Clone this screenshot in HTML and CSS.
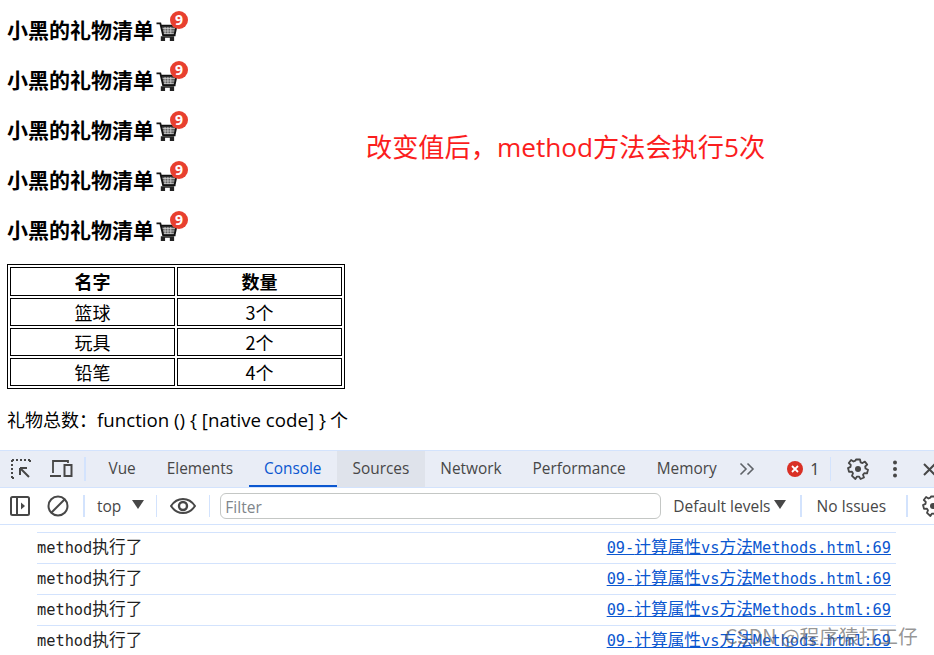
FILE: index.html
```html
<!DOCTYPE html>
<html lang="zh">
<head>
<meta charset="utf-8">
<title>礼物清单</title>
<link rel="stylesheet" href="styles.css">
</head>
<body>
<svg class="defs" width="0" height="0" aria-hidden="true">
  <symbol id="cart" viewBox="0 0 22 21">
    <path d="M5 5.500h16l-2 9H7.500z" fill="#555"/>
    <path d="M6 8h14.500M6.500 10.500h13.500M7 13h12.500M9.500 6v8M12.500 6v8M15.500 6v8" stroke="#ddd" stroke-width=".8" fill="none"/>
    <path d="M.5 2.500h4l3 12.500h13M5 5h16.500l-2 9.500" fill="none" stroke="#111" stroke-width="2"/>
    <path d="M5 16v5h4.500v-3.500h5V21H19v-5z" fill="#222"/>
  </symbol>
</svg>
<main class="page">
  <div class="gifts">
    <h3 class="gift-title">小黑的礼物清单<span class="cart-wrap"><svg class="cart"><use href="#cart"/></svg><span class="badge">9</span></span></h3>
    <h3 class="gift-title">小黑的礼物清单<span class="cart-wrap"><svg class="cart"><use href="#cart"/></svg><span class="badge">9</span></span></h3>
    <h3 class="gift-title">小黑的礼物清单<span class="cart-wrap"><svg class="cart"><use href="#cart"/></svg><span class="badge">9</span></span></h3>
    <h3 class="gift-title">小黑的礼物清单<span class="cart-wrap"><svg class="cart"><use href="#cart"/></svg><span class="badge">9</span></span></h3>
    <h3 class="gift-title">小黑的礼物清单<span class="cart-wrap"><svg class="cart"><use href="#cart"/></svg><span class="badge">9</span></span></h3>
  </div>
  <table class="gift-table">
    <tr><th>名字</th><th>数量</th></tr>
    <tr><td>篮球</td><td>3个</td></tr>
    <tr><td>玩具</td><td>2个</td></tr>
    <tr><td>铅笔</td><td>4个</td></tr>
  </table>
  <p class="total">礼物总数：<span class="total-code">function () { [native code] }</span> 个</p>
</main>
<p class="note">改变值后，method方法会执行5次</p>
<section class="devtools">
  <div class="tabbar">
    <span class="tool"><svg width="22" height="22" viewBox="0 0 22 22"><path d="M2 2h18M2 2v18M2 20h3M20 2v3" fill="none" stroke="#474747" stroke-width="2" stroke-dasharray="2 2"/><path d="M10 10l9 9M10 10h7M10 10v7" fill="none" stroke="#474747" stroke-width="2"/></svg></span>
    <span class="tool tool-device"><svg width="24" height="22" viewBox="0 0 24 22"><path d="M4 15V3h15v2" fill="none" stroke="#474747" stroke-width="1.800"/><path d="M1 18h11" stroke="#474747" stroke-width="2"/><rect x="15.500" y="7" width="7" height="11" fill="none" stroke="#474747" stroke-width="2"/></svg></span>
    <span class="sep sep-tabs"></span>
    <div class="tabs">
      <span class="tab">Vue</span>
      <span class="tab">Elements</span>
      <span class="tab tab-active">Console</span>
      <span class="tab tab-hover">Sources</span>
      <span class="tab">Network</span>
      <span class="tab">Performance</span>
      <span class="tab">Memory</span>
    </div>
    <svg class="more" width="16" height="14" viewBox="0 0 16 14"><path d="M1.500 1.500l5.500 5.500-5.500 5.500M8.500 1.500l5.500 5.500-5.500 5.500" fill="none" stroke="#5f6368" stroke-width="1.600"/></svg>
    <span class="errors"><svg width="16" height="16" viewBox="0 0 16 16"><circle cx="8" cy="8" r="8" fill="#d93025"/><path d="M5 5l6 6M11 5l-6 6" stroke="#fff" stroke-width="1.800"/></svg><span class="error-count">1</span></span>
    <span class="sep sep-right"></span>
    <svg class="gear" width="22" height="22" viewBox="0 0 22 22"><path d="M9 1.500h4l.6 2.800 1.900.8 2.400-1.500 2.300 3-2 1.900.3 2 2.500 1.200-1 3.700-2.800-.2-1.200 1.600 1 2.700-3.400 1.500-1.600-2.400h-2l-1.600 2.400L5 17.900l1-2.700-1.200-1.600-2.800.2-1-3.700 2.500-1.200.3-2-2-1.900 2.300-3 2.400 1.500 1.900-.8z" fill="none" stroke="#474747" stroke-width="1.800" stroke-linejoin="round"/><circle cx="11" cy="11" r="3" fill="#474747"/></svg>
    <svg class="kebab" width="6" height="18" viewBox="0 0 6 18"><circle cx="3" cy="2.500" r="2" fill="#474747"/><circle cx="3" cy="9" r="2" fill="#474747"/><circle cx="3" cy="15.500" r="2" fill="#474747"/></svg>
    <svg class="close" width="12" height="14" viewBox="0 0 12 14"><path d="M1 2l11 11M12 2L1 13" stroke="#474747" stroke-width="2"/></svg>
  </div>
  <div class="toolbar">
    <svg class="side" width="20" height="20" viewBox="0 0 20 20"><rect x="1" y="1" width="18" height="18" rx="1.500" fill="none" stroke="#474747" stroke-width="2"/><path d="M7 1v18" stroke="#474747" stroke-width="2"/><path d="M11 6.500l4 3.500-4 3.500z" fill="#474747"/></svg>
    <svg class="block" width="22" height="22" viewBox="0 0 22 22"><circle cx="11" cy="11" r="9.500" fill="none" stroke="#474747" stroke-width="2"/><path d="M4.500 17.500l13-13" stroke="#474747" stroke-width="2"/></svg>
    <span class="sep sep-a"></span>
    <span class="top-label">top</span>
    <span class="caret caret-top"></span>
    <span class="sep sep-b"></span>
    <svg class="eye" width="26" height="16" viewBox="0 0 26 16"><path d="M1 8c3-4.500 7-7 12-7s9 2.500 12 7c-3 4.500-7 7-12 7S4 12.500 1 8z" fill="none" stroke="#474747" stroke-width="2"/><circle cx="13" cy="8" r="4" fill="none" stroke="#474747" stroke-width="2.400"/></svg>
    <span class="sep sep-c"></span>
    <span class="filter">Filter</span>
    <span class="levels">Default levels</span>
    <span class="caret caret-levels"></span>
    <span class="sep sep-d"></span>
    <span class="issues">No Issues</span>
    <span class="sep sep-e"></span>
    <svg class="gear gear-second" width="22" height="22" viewBox="0 0 22 22"><path d="M9 1.500h4l.6 2.800 1.900.8 2.400-1.500 2.300 3-2 1.900.3 2 2.500 1.200-1 3.700-2.800-.2-1.200 1.600 1 2.700-3.400 1.500-1.600-2.400h-2l-1.600 2.400L5 17.900l1-2.700-1.200-1.600-2.800.2-1-3.700 2.500-1.200.3-2-2-1.900 2.300-3 2.400 1.500 1.900-.8z" fill="none" stroke="#474747" stroke-width="1.800" stroke-linejoin="round"/><circle cx="11" cy="11" r="3" fill="#474747"/></svg>
  </div>
  <div class="logs">
    <div class="log"><span>method<span class="cj">执行了</span></span><a class="src">09-<span class="cj">计算属性</span>vs<span class="cj">方法</span>Methods.html:69</a></div>
    <div class="log"><span>method<span class="cj">执行了</span></span><a class="src">09-<span class="cj">计算属性</span>vs<span class="cj">方法</span>Methods.html:69</a></div>
    <div class="log"><span>method<span class="cj">执行了</span></span><a class="src">09-<span class="cj">计算属性</span>vs<span class="cj">方法</span>Methods.html:69</a></div>
    <div class="log"><span>method<span class="cj">执行了</span></span><a class="src">09-<span class="cj">计算属性</span>vs<span class="cj">方法</span>Methods.html:69</a></div>
  </div>
</section>
<span class="watermark">CSDN @程序猿打工仔</span>
</body>
</html>
```

FILE: styles.css
```css
html, body { margin: 0; padding: 0; }
body {
  width: 934px;
  height: 655px;
  overflow: hidden;
  position: relative;
  background: #fff;
  color: #000;
  font-family: "Noto Sans", "Noto Sans CJK SC", sans-serif;
}
.defs { position: absolute; }
.page { padding: 14px 0 0 7px; height: 434px; box-sizing: border-box; }
.gift-title {
  margin: 0 0 20px;
  height: 30px;
  line-height: 30px;
  font-size: 21px;
  font-weight: 700;
  white-space: nowrap;
  display: flex;
  font-family: "Noto Sans CJK SC", sans-serif;
}
.cart-wrap { position: relative; width: 22px; height: 30px; margin-left: 2px; display: block; }
.cart { position: absolute; left: 0; top: 7px; width: 21px; height: 20px; }
.badge {
  position: absolute;
  left: 14px;
  top: -3px;
  width: 18px;
  height: 18px;
  border-radius: 50%;
  background: #e8402f;
  color: #fff;
  font: 700 14px/18px "Noto Sans", sans-serif;
  text-align: center;
}
.gift-table {
  width: 338px;
  table-layout: fixed;
  border: 1px solid #000;
  border-spacing: 2px;
  border-collapse: separate;
  margin-top: 2px;
  font-family: "Noto Sans CJK SC", sans-serif;
  font-size: 18px;
}
.gift-table th, .gift-table td { border: 1px solid #000; padding: 0; text-align: center; }
.gift-table th { line-height: 27px; font-weight: 700; }
.gift-table td { line-height: 26px; font-weight: 400; }
.total {
  margin: 17px 0 0;
  line-height: 27px;
  font-size: 18px;
  font-weight: 400;
  white-space: nowrap;
  font-family: "Noto Sans CJK SC", sans-serif;
}
.total-code { font-family: "Open Sans", sans-serif; font-size: 18.700px; font-weight: 400; }
.note {
  position: absolute;
  left: 366px;
  top: 128px;
  margin: 0;
  line-height: 38px;
  font-size: 26.200px;
  color: #fb1d1d;
  white-space: nowrap;
  font-family: "Open Sans", "Noto Sans CJK SC", sans-serif;
}
.devtools {
  position: absolute;
  left: 0;
  right: 0;
  top: 450px;
  color: #474747;
}
.tabbar {
  height: 36px;
  background: #e9edf6;
  border-top: 1px solid #d3e3fd;
  border-bottom: 1px solid #d3e3fd;
  display: flex;
  align-items: center;
  position: relative;
  overflow: hidden;
}
.tool { display: flex; margin-left: 10px; flex: none; }
.tool-device { margin-left: 17px; }
.sep { width: 1px; background: #d3e3fd; flex: none; }
.sep-tabs { height: 24px; margin-left: 11px; width: 2px; }
.tabs { display: flex; height: 100%; margin-left: 7px; flex: none; }
.tab {
  padding: 0 15.500px;
  font-size: 15.400px;
  line-height: 36px;
  white-space: nowrap;
  font-family: "Open Sans", sans-serif;
}
.tab-active { color: #0b57d0; box-shadow: inset 0 -2px 0 #0b57d0; }
.tab-hover { background: #dfe3eb; }
.more { margin-left: 7px; flex: none; }
.errors { display: flex; align-items: center; margin-left: 32px; flex: none; }
.error-count { font-size: 16px; margin-left: 7px; }
.sep-right { height: 24px; margin-left: 11px; }
.gear { flex: none; margin-left: 16px; }
.kebab { flex: none; margin-left: 23px; }
.close { flex: none; margin-left: 25px; }
.toolbar {
  height: 36px;
  border-bottom: 1px solid #d3e3fd;
  display: flex;
  align-items: center;
  font-size: 15.500px;
  font-family: "Open Sans", sans-serif;
  background: #fff;
  white-space: nowrap;
}
.side { margin-left: 10px; flex: none; }
.block { margin-left: 17px; flex: none; }
.toolbar .sep { height: 22px; }
.sep-a { margin-left: 14px; width: 2px; }
.top-label { margin-left: 12px; }
.caret {
  width: 0;
  height: 0;
  border-left: 6px solid transparent;
  border-right: 6px solid transparent;
  border-top: 9px solid #474747;
  flex: none;
}
.caret-top { margin-left: 11px; margin-top: -3px; }
.sep-b { margin-left: 12px; }
.eye { margin-left: 13px; flex: none; }
.sep-c { margin-left: 13px; }
.filter {
  margin-left: 10px;
  width: 441px;
  height: 26px;
  flex: none;
  box-sizing: border-box;
  border: 1px solid #c4c7c5;
  border-radius: 6px;
  padding-left: 4px;
  line-height: 27px;
  color: #80868b;
}
.levels { margin-left: 12px; }
.caret-levels { margin-left: 4px; margin-top: -3px; }
.sep-d { margin-left: 14px; width: 2px; }
.issues { margin-left: 14px; }
.sep-e { margin-left: 20px; width: 2px; }
.gear-second { margin-left: 14px; }
.logs {
  margin: 7px 0 0 37px;
  width: 859px;
  border-top: 1px solid #d3e3fd;
  font-family: "DejaVu Sans Mono", monospace;
  font-size: 15.300px;
}
.log {
  height: 30px;
  line-height: 26px;
  border-bottom: 1px solid #d3e3fd;
  display: flex;
  justify-content: space-between;
  padding-right: 5px;
  color: #1f1f1f;
  white-space: nowrap;
}
.log:last-child { border-bottom: 0; }
.cj { font-size: 16.700px; font-family: "Noto Sans CJK SC", sans-serif; font-weight: 400; }
.src { color: #0b57d0; text-decoration: underline; }
.watermark {
  position: absolute;
  left: 725px;
  top: 622px;
  font-size: 19.700px;
  line-height: 28px;
  color: rgba(90, 90, 90, 0.65);
  white-space: nowrap;
  font-family: "Noto Sans CJK SC", sans-serif;
}
```
